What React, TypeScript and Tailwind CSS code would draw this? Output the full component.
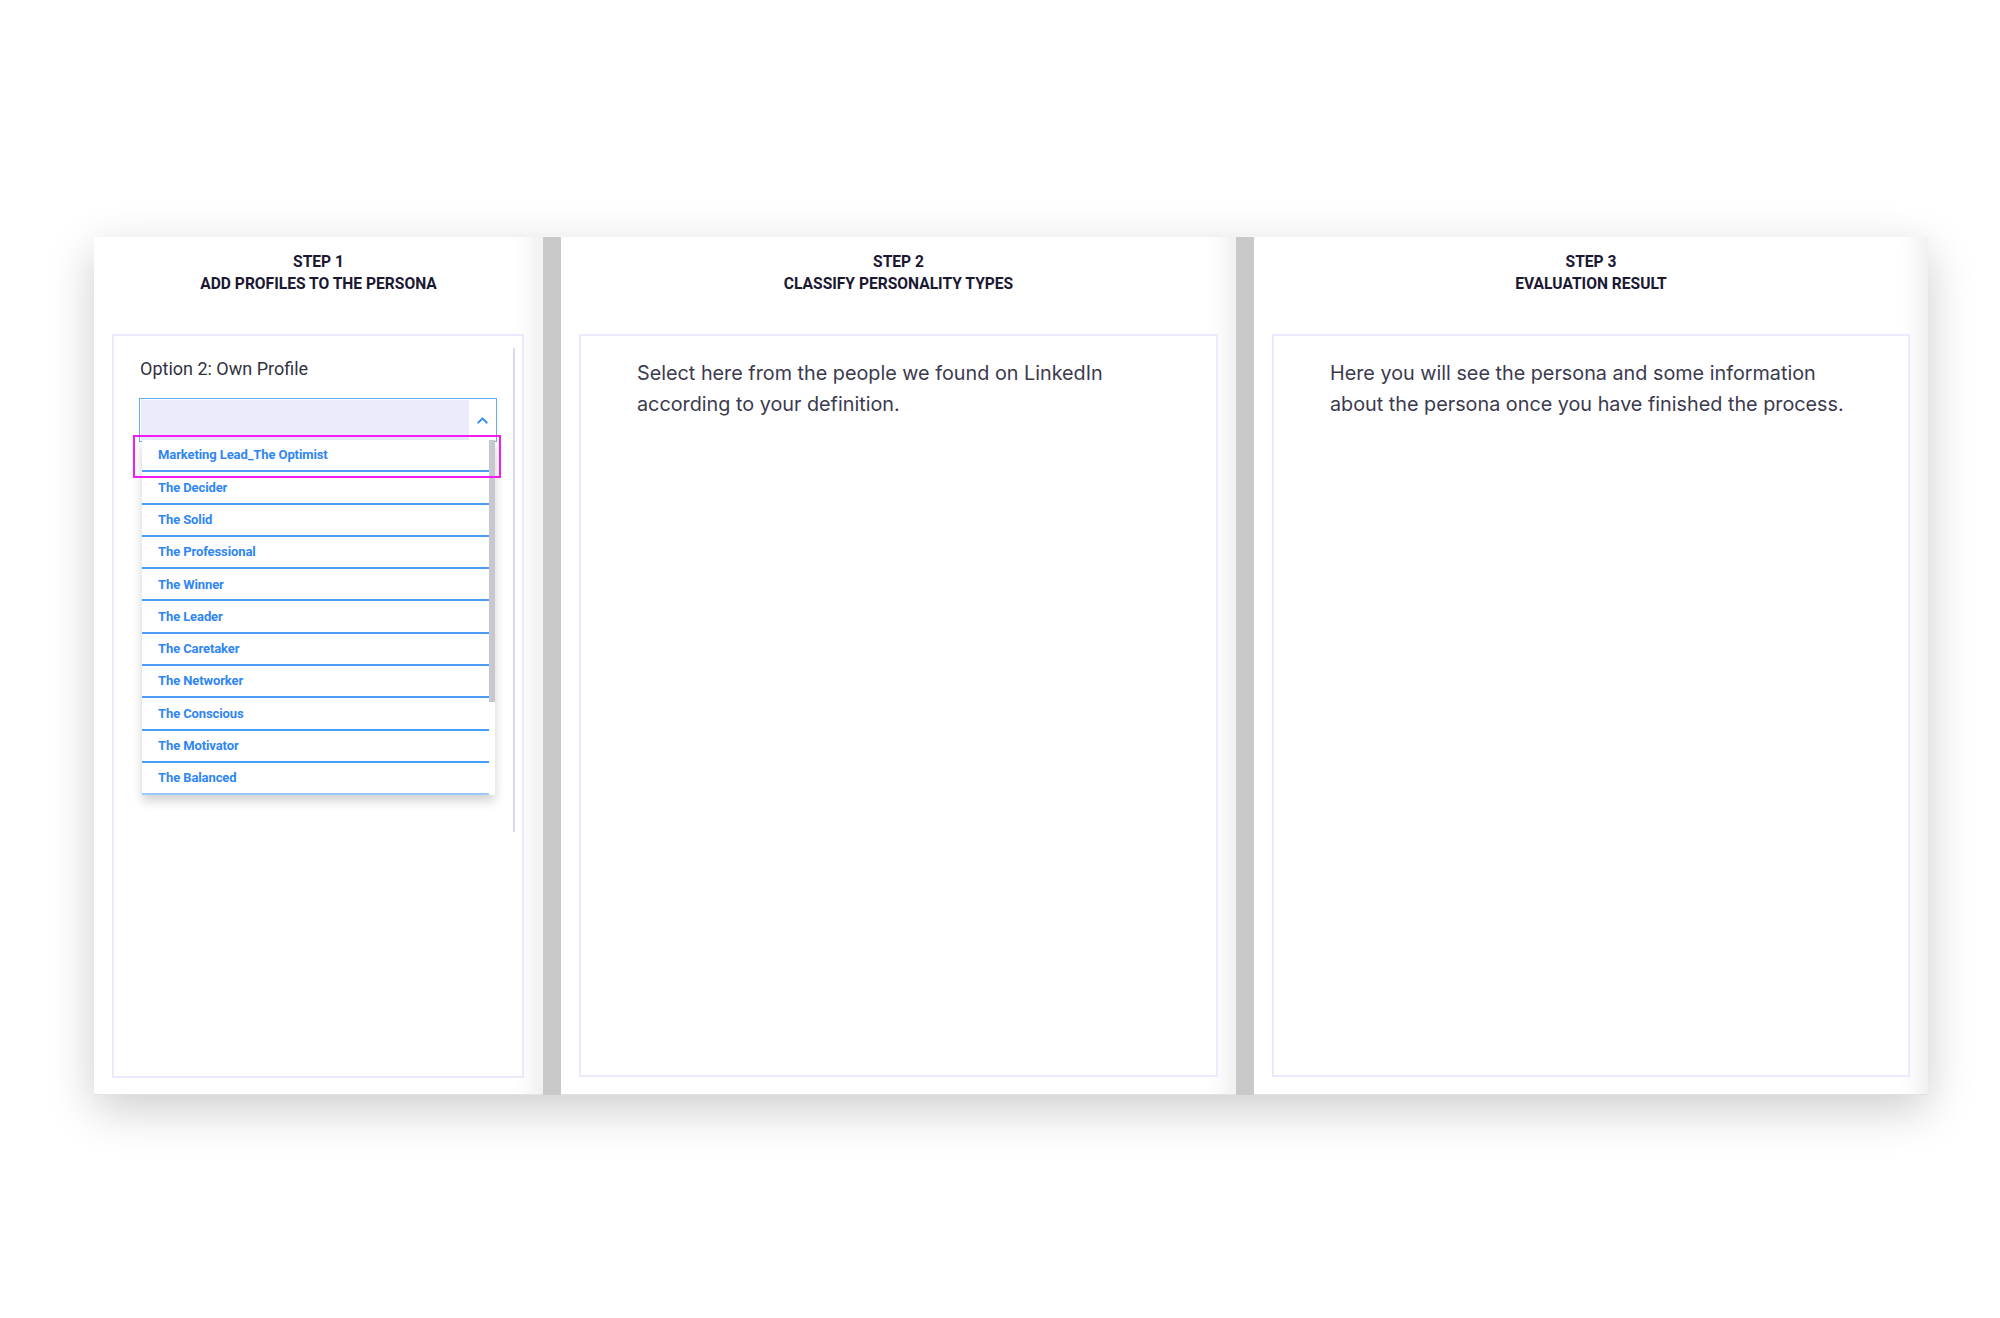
import { ChevronUp } from 'lucide-react';

const personas = [
  'Marketing Lead_The Optimist',
  'The Decider',
  'The Solid',
  'The Professional',
  'The Winner',
  'The Leader',
  'The Caretaker',
  'The Networker',
  'The Conscious',
  'The Motivator',
  'The Balanced',
];

function StepHeader({ step, title }: { step: number; title: string }) {
  return (
    <div className="h-[97px] shrink-0 pt-[14px] text-center font-['Roboto',sans-serif] text-[15.6px] font-bold leading-[22px] text-[#1b1832]">
      <div>STEP {step}</div>
      <div>{title}</div>
    </div>
  );
}

function InfoText({ children }: { children: React.ReactNode }) {
  return (
    <div className="flex-1 mx-[18px] mb-[17px] border-2 border-[#ebe9fc] bg-white pl-[56px] pr-[48px] pt-[22px]">
      <p className="font-['Inter',sans-serif] text-[19.8px] leading-[31px] text-[#3b3a4e]">{children}</p>
    </div>
  );
}

export default function App() {
  return (
    <div className="h-[1318px] w-full overflow-hidden bg-white">
      {/* Steps row */}
      <div className="ml-[94px] mt-[237px] flex w-fit gap-[18px] bg-[#c9c9c9] shadow-[0_14px_44px_rgba(0,0,0,0.2)]">
        {/* Step 1 */}
        <div className="flex h-[858px] w-[449px] flex-col border-b border-[#e2e2e2] bg-white shadow-[inset_-30px_0_26px_-22px_rgba(0,0,0,0.08)]">
          <StepHeader step={1} title="ADD PROFILES TO THE PERSONA" />
          <div className="relative flex-1 ml-[18px] mr-[19px] mb-[16px] border-2 border-[#ebe9fc] bg-white px-[25px] pt-[21px]">
            <p className="pl-[1px] font-['Roboto',sans-serif] text-[18px] leading-[24px] text-[#33323f]">Option 2: Own Profile</p>

            <div className="relative mt-[17px] flex h-[44px] w-[358px] border border-[#64aaf5] p-[1px]">
              <div className="flex-1 bg-[#ecebfc]" />
              <div className="flex w-[26px] items-center justify-center">
                <ChevronUp size={17} strokeWidth={2.8} className="text-[#2f8af2]" />
              </div>

              {/* open menu */}
              <div className="absolute left-[2px] top-[41px] z-10 w-[353px] bg-white shadow-[0_6px_10px_rgba(0,0,0,0.18)]">
                <div className="mr-[6px]">
                  {personas.map((name, i) => (
                    <div
                      key={name}
                      className={`flex h-[32.3px] items-center border-b-2 pl-[16px] font-['Roboto',sans-serif] text-[13px] font-bold tracking-[-0.1px] text-[#2f86f3] ${
                        i === personas.length - 1 ? 'border-[#9ccaf8]' : 'border-[#4a9cf6]'
                      }`}
                    >
                      {name}
                    </div>
                  ))}
                </div>
                <div className="absolute right-0 top-0 h-[262px] w-[6px] bg-[#c7c7cf]" />
              </div>

              {/* highlight */}
              <div className="pointer-events-none absolute left-[-7px] top-[36px] z-20 h-[43px] w-[368px] border-2 border-[#f31cf0]" />
            </div>

            <div className="absolute left-[399px] top-[12px] h-[484px] w-[2px] bg-[#dcdaee]" />
          </div>
        </div>

        {/* Step 2 */}
        <div className="flex h-[858px] w-[675px] flex-col border-b border-[#e2e2e2] bg-white shadow-[inset_-30px_0_26px_-22px_rgba(0,0,0,0.08)]">
          <StepHeader step={2} title="CLASSIFY PERSONALITY TYPES" />
          <InfoText>Select here from the people we found on LinkedIn according to your definition.</InfoText>
        </div>

        {/* Step 3 */}
        <div className="flex h-[858px] w-[674px] flex-col border-b border-[#e2e2e2] bg-white shadow-[inset_-30px_0_26px_-22px_rgba(0,0,0,0.08)]">
          <StepHeader step={3} title="EVALUATION RESULT" />
          <InfoText>Here you will see the persona and some information about the persona once you have finished the process.</InfoText>
        </div>
      </div>
    </div>
  );
}
